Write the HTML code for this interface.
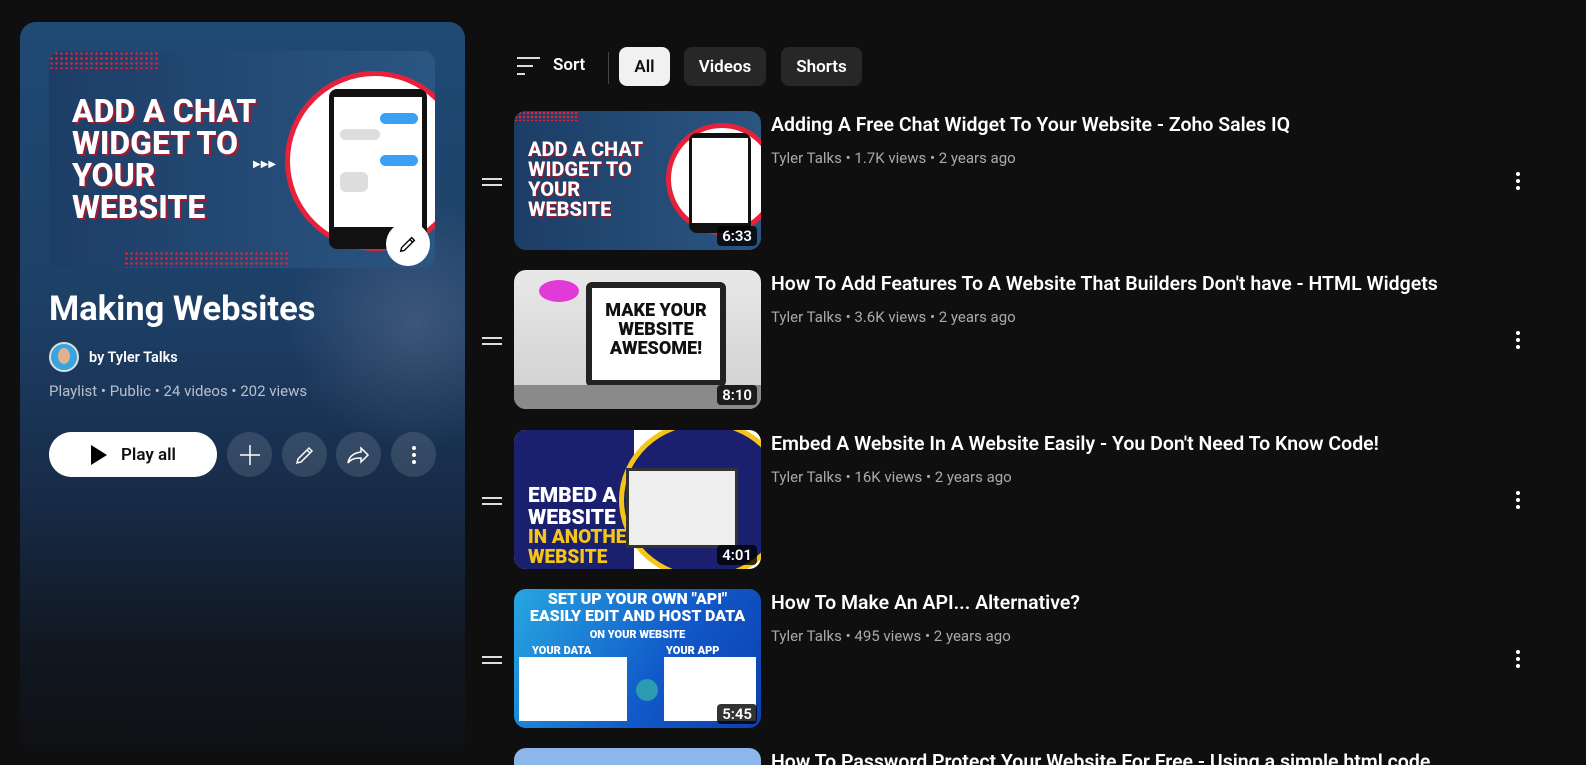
<!DOCTYPE html>
<html><head><meta charset="utf-8"><style>
*{margin:0;padding:0;box-sizing:border-box}
html,body{width:1586px;height:765px;overflow:hidden}
body{background:#0f0f0f;font-family:"Roboto","Liberation Sans",sans-serif;color:#fff;position:relative}
.panel{position:absolute;left:20px;top:22px;width:445px;height:730px;border-radius:16px;background:linear-gradient(180deg,#1f4a74 0%,#1d3f66 40%,#172b47 65%,#111822 85%,#0f1013 100%);overflow:hidden}
.panel:after{content:"";position:absolute;right:-80px;top:170px;width:260px;height:260px;background:radial-gradient(circle,rgba(120,130,160,.35),rgba(0,0,0,0) 70%)}
.thumb{position:absolute;border-radius:12px;overflow:hidden}
.big{left:29px;top:29px;width:386px;height:217px;background:linear-gradient(90deg,#1c3d66,#2a5682);z-index:1}
.ttl{position:absolute;font-weight:800;color:#fff;line-height:1.0;text-shadow:2px 2px 0 #a01a30}
.circ{position:absolute;border-radius:50%;background:#fff;border:5px solid #e8213b}
.phone{position:absolute;background:#111;border-radius:8px}
.screen{position:absolute;background:#fff}
.bub{position:absolute;border-radius:6px}
h1{position:absolute;left:29px;top:267px;font-size:34.5px;font-weight:700;z-index:1}
.by{position:absolute;left:29px;top:320px;display:flex;align-items:center;font-size:14.5px;font-weight:600;z-index:1}
.av{width:30px;height:30px;border-radius:50%;background:#3aa4e0;border:2px solid #ddd;margin-right:10px;position:relative;overflow:hidden}
.av:after{content:"";position:absolute;left:7px;top:4px;width:12px;height:16px;border-radius:50%;background:#e2b28f}
.meta{position:absolute;left:29px;top:360px;font-size:15px;color:#b8c0cc;z-index:1}
.play{position:absolute;left:29px;top:410px;width:168px;height:45px;border-radius:23px;background:#fff;color:#0f0f0f;font-size:17px;font-weight:600;display:flex;align-items:center;padding-left:42px;z-index:1}
.play:before{content:"";position:absolute;left:42px;top:13px;border-left:16px solid #000;border-top:10px solid transparent;border-bottom:10px solid transparent}
.play span{margin-left:30px}
.cb{position:absolute;top:410px;width:45px;height:45px;border-radius:50%;background:rgba(255,255,255,.12);z-index:1;display:flex;align-items:center;justify-content:center}
.chip{position:absolute;top:47px;height:39px;border-radius:8px;background:#272727;font-size:17px;font-weight:600;display:flex;align-items:center;justify-content:center}
.row{position:absolute;left:480px;width:1100px;height:139px}
.row .t{left:34px;top:0;width:247px;height:139px}
.row h3{position:absolute;left:291px;top:2px;font-size:19.5px;font-weight:600;white-space:nowrap}
.row p{position:absolute;left:291px;top:38px;font-size:15px;color:#aaa}
.dur{position:absolute;right:4px;bottom:4px;background:rgba(0,0,0,.8);font-size:15px;font-weight:600;padding:1px 5px;border-radius:4px;color:#fff}
.hnd{position:absolute;left:2px;top:67px;width:20px;height:8px;border-top:2px solid #ddd;border-bottom:2px solid #ddd}
.dots{position:absolute;left:1036px;top:61px;width:4px}
.dots i{display:block;width:4px;height:4px;border-radius:50%;background:#fff;margin-bottom:3px}
</style></head><body>
<div class="panel">
 <div class="thumb big">
  <div style="position:absolute;left:0;top:0;width:110px;height:18px;background:radial-gradient(#e8213b 1px,transparent 1.5px) 0 0/5px 5px"></div>
  <div style="position:absolute;left:75px;top:200px;width:165px;height:17px;background:radial-gradient(#e8213b 1px,transparent 1.5px) 0 0/5px 5px"></div>
  <div class="ttl" style="left:23px;top:44px;font-size:32px">ADD A CHAT<br>WIDGET TO<br>YOUR<br>WEBSITE</div>
  <div style="position:absolute;left:204px;top:108px;font-size:10px;color:#fff">▶▶▶</div>
  <div class="circ" style="left:236px;top:20px;width:180px;height:180px"></div>
  <div class="phone" style="left:280px;top:38px;width:98px;height:160px"><div class="screen" style="left:5px;top:8px;width:88px;height:130px">
   <div class="bub" style="left:46px;top:16px;width:38px;height:11px;background:#3aa0f5"></div>
   <div class="bub" style="left:6px;top:32px;width:40px;height:11px;background:#ddd"></div>
   <div class="bub" style="left:46px;top:58px;width:38px;height:11px;background:#3aa0f5"></div>
   <div class="bub" style="left:6px;top:75px;width:28px;height:20px;background:#ddd"></div>
  </div></div>
  <div style="position:absolute;left:337px;top:171px;width:44px;height:44px;border-radius:50%;background:#fff;display:flex;align-items:center;justify-content:center"><svg width="22" height="22" viewBox="0 0 24 24" fill="none" stroke="#000" stroke-width="1.5"><path d="M4 20l1-4L16 5l3 3L8 19z M14 7l3 3"/></svg></div>
 </div>
 <h1>Making Websites</h1>
 <div class="by"><div class="av"></div>by Tyler Talks</div>
 <div class="meta">Playlist • Public • 24 videos • 202 views</div>
 <div class="play"><span>Play all</span></div>
 <div class="cb" style="left:207px"><svg width="24" height="24" viewBox="0 0 24 24" stroke="#fff" stroke-width="1.5"><path d="M12 2v20M2 12h20"/></svg></div>
 <div class="cb" style="left:262px"><svg width="24" height="24" viewBox="0 0 24 24" fill="none" stroke="#fff" stroke-width="1.5"><path d="M4 20l1-4L16 5l3 3L8 19z M14 7l3 3"/></svg></div>
 <div class="cb" style="left:316px"><svg width="26" height="24" viewBox="0 0 26 24" fill="none" stroke="#fff" stroke-width="1.5"><path d="M15 5l7 7-7 7v-4c-6 0-10 1-13 5 1-6 5-10 13-11z"/></svg></div>
 <div class="cb" style="left:371px"><div class="dots" style="position:static"><i></i><i></i><i style="margin:0"></i></div></div>
</div>

<svg style="position:absolute;left:517px;top:56px" width="24" height="22" viewBox="0 0 24 22" stroke="#ddd" stroke-width="2"><path d="M0 2h23M0 10h16M0 18h8"/></svg>
<div style="position:absolute;left:553px;top:55px;font-size:17px;font-weight:600">Sort</div>
<div style="position:absolute;left:608px;top:52px;width:1px;height:32px;background:#444"></div>
<div class="chip" style="left:619px;width:51px;background:#f1f1f1;color:#0f0f0f">All</div>
<div class="chip" style="left:684px;width:82px">Videos</div>
<div class="chip" style="left:781px;width:81px">Shorts</div>

<div class="row" style="top:111px"><div class="hnd"></div>
 <div class="thumb t" style="background:linear-gradient(90deg,#1c3d66,#2a5682)">
  <div style="position:absolute;left:0;top:0;width:65px;height:10px;background:radial-gradient(#e8213b 1px,transparent 1.5px) 0 0/4px 4px"></div>
  <div class="ttl" style="left:14px;top:28px;font-size:20px;text-shadow:1px 1px 0 #a01a30">ADD A CHAT<br>WIDGET TO<br>YOUR<br>WEBSITE</div>
  <div class="circ" style="left:152px;top:12px;width:112px;height:112px"></div>
  <div class="phone" style="left:175px;top:22px;width:62px;height:100px"><div class="screen" style="left:3px;top:5px;width:56px;height:85px"></div></div>
  <div class="dur">6:33</div></div>
 <h3>Adding A Free Chat Widget To Your Website - Zoho Sales IQ</h3>
 <p>Tyler Talks • 1.7K views • 2 years ago</p>
 <div class="dots"><i></i><i></i><i></i></div></div>

<div class="row" style="top:270px"><div class="hnd"></div>
 <div class="thumb t" style="background:linear-gradient(180deg,#e8e8e8,#cfcfcf)">
  <div style="position:absolute;left:72px;top:12px;width:140px;height:105px;background:#222;border-radius:6px"></div>
  <div style="position:absolute;left:78px;top:18px;width:128px;height:92px;background:#fff;color:#111;font-weight:900;font-size:18px;text-align:center;line-height:1.05;padding-top:14px">MAKE YOUR<br>WEBSITE<br>AWESOME!</div>
  <div style="position:absolute;left:25px;top:10px;width:40px;height:22px;background:#e23ad6;border-radius:50%"></div>
  <div style="position:absolute;left:0;top:115px;width:247px;height:24px;background:#8a8a8a"></div>
  <div class="dur">8:10</div></div>
 <h3>How To Add Features To A Website That Builders Don't have - HTML Widgets</h3>
 <p>Tyler Talks • 3.6K views • 2 years ago</p>
 <div class="dots"><i></i><i></i><i></i></div></div>

<div class="row" style="top:430px"><div class="hnd"></div>
 <div class="thumb t" style="background:#fff">
  <div style="position:absolute;left:0;top:0;width:120px;height:139px;background:#1a1f6e"></div>
  <div style="position:absolute;left:105px;top:-10px;width:170px;height:160px;border-radius:50%;background:#1a1f6e;border:5px solid #f5c518"></div>
  <div style="position:absolute;left:14px;top:55px;font-size:21px;font-weight:900;line-height:1.05">EMBED A<br>WEBSITE</div>
  <div style="position:absolute;left:14px;top:97px;font-size:19px;font-weight:900;line-height:1.05;color:#f5c518">IN ANOTHER<br>WEBSITE</div>
  <div style="position:absolute;left:112px;top:38px;width:112px;height:80px;background:#eee;border:3px solid #333"></div>
  <div class="dur">4:01</div></div>
 <h3>Embed A Website In A Website Easily - You Don't Need To Know Code!</h3>
 <p>Tyler Talks • 16K views • 2 years ago</p>
 <div class="dots"><i></i><i></i><i></i></div></div>

<div class="row" style="top:589px"><div class="hnd"></div>
 <div class="thumb t" style="background:linear-gradient(120deg,#27a7e0,#1158c8 60%,#0d3fae)">
  <div style="position:absolute;left:0;top:2px;width:247px;text-align:center;font-size:16px;font-weight:900;line-height:1.05">SET UP YOUR OWN "API"<br>EASILY EDIT AND HOST DATA<br><span style="font-size:11px">ON YOUR WEBSITE</span></div>
  <div style="position:absolute;left:18px;top:55px;font-size:11px;font-weight:900">YOUR DATA</div>
  <div style="position:absolute;left:152px;top:55px;font-size:11px;font-weight:900">YOUR APP</div>
  <div style="position:absolute;left:5px;top:68px;width:108px;height:64px;background:#fff"></div>
  <div style="position:absolute;left:150px;top:68px;width:92px;height:64px;background:#fff"></div>
  <div style="position:absolute;left:122px;top:90px;width:22px;height:22px;border-radius:50%;background:#2a9bb0"></div>
  <div class="dur">5:45</div></div>
 <h3>How To Make An API... Alternative?</h3>
 <p>Tyler Talks • 495 views • 2 years ago</p>
 <div class="dots"><i></i><i></i><i></i></div></div>

<div class="row" style="top:748px;height:17px;overflow:hidden"><div class="thumb t" style="background:#8db6ea"></div>
 <h3>How To Password Protect Your Website For Free - Using a simple html code</h3></div>
</body></html>
